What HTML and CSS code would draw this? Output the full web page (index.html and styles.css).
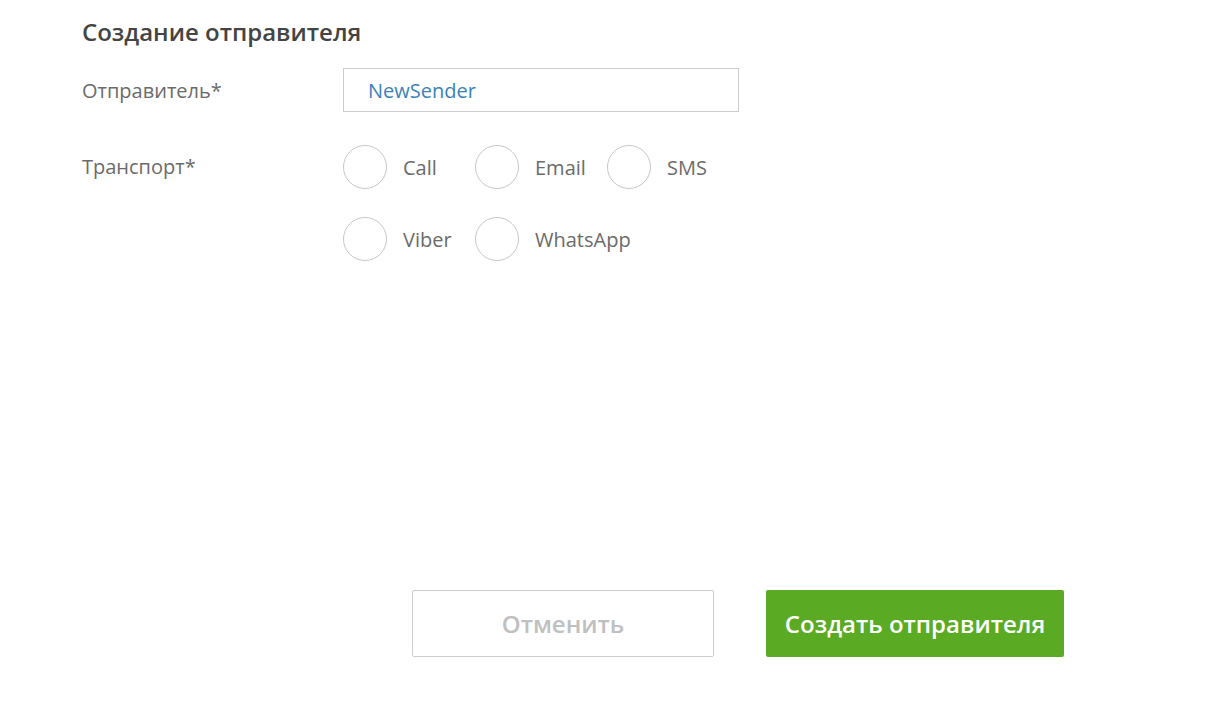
FILE: index.html
```html
<!DOCTYPE html>
<html lang="ru">
  <head>
    <meta charset="UTF-8" />
    <title>Создание отправителя</title>
    <link rel="stylesheet" href="styles.css">
  </head>
  <body>
    <div class="sender">
      <h2 class="sender-title">Создание отправителя</h2>

      <!-- имя отправителя -->
      <div class="field">
        <label class="field-label" for="name">Отправитель*</label>
        <input class="field-input" id="name" type="text" value="NewSender" />
      </div>

      <!-- транспорт -->
      <div class="field field-top">
        <span class="field-label">Транспорт*</span>
        <div class="radios">
          <label class="radio"><span class="radio-circle"></span>Call</label>
          <label class="radio"><span class="radio-circle"></span>Email</label>
          <label class="radio"><span class="radio-circle"></span>SMS</label>
          <label class="radio"><span class="radio-circle"></span>Viber</label>
          <label class="radio"><span class="radio-circle"></span>WhatsApp</label>
        </div>
      </div>

      <div class="buttons">
        <button class="btn btn-cancel">Отменить</button>
        <button class="btn btn-create">Создать отправителя</button>
      </div>
    </div>
  </body>
</html>
```

FILE: styles.css
```css
* {
  font-family: "Open Sans", "Noto Sans", sans-serif;
  box-sizing: border-box;
}

body {
  margin: 0;
  background-color: white;
  color: #6b6b6b;
}

.sender {
  padding: 17px 0 0 82px;
}

/* заголовок */
.sender-title {
  margin: 0 0 21px 0;
  font-size: 24px;
  font-weight: 600;
  line-height: 30px;
  color: #444;
}

.field {
  display: flex;
  align-items: center;
  margin-bottom: 33px;
}
.field-top {
  align-items: flex-start;
}

.field-label {
  width: 261px;
  font-size: 20px;
  color: #6b6b6b;
}
.field-top .field-label {
  line-height: 44px;
}

.field-input {
  width: 396px;
  height: 44px;
  border: 1px solid #ccc;
  padding: 0 24px;
  font-size: 20px;
  color: #3b82b8;
  outline: none;
}

/* радио кнопки */
.radios {
  width: 396px;
  display: flex;
  flex-wrap: wrap;
  row-gap: 28px;
}
.radio {
  width: 132px;
  display: flex;
  align-items: center;
  gap: 16px;
  font-size: 20px;
  color: #6b6b6b;
  cursor: pointer;
}
.radio-circle {
  width: 44px;
  height: 44px;
  border: 1px solid #c8c8c8;
  border-radius: 50%;
  flex-shrink: 0;
}

/* кнопки внизу */
.buttons {
  display: flex;
  gap: 52px;
  margin: 329px 0 0 330px;
}
.btn {
  height: 67px;
  font-size: 24px;
  font-weight: 600;
  border-radius: 2px;
  cursor: pointer;
}
.btn-cancel {
  width: 302px;
  background-color: white;
  border: 1px solid #ccc;
  color: #c0c0c0;
}
.btn-create {
  width: 298px;
  background-color: #5aab23;
  border: none;
  color: white;
}
```
